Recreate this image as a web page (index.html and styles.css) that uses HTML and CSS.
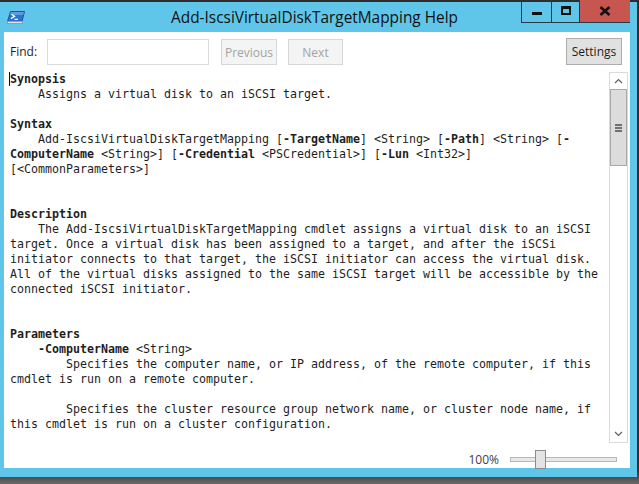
FILE: index.html
```html
<!DOCTYPE html>
<html lang="en">
<head>
<meta charset="utf-8">
<title>Add-IscsiVirtualDiskTargetMapping Help</title>
<link rel="stylesheet" href="styles.css">
</head>
<body>
<div class="screen">
  <div class="window">
    <div class="titlebar">
      <div class="tb-left">
        <svg class="app-icon" width="18" height="13" viewBox="0 0 18 13" aria-hidden="true">
          <polygon points="3.5,0.5 17.5,0.5 15,10.5 0.5,10.5" fill="#2f72c9" stroke="#1c58a6"/>
          <polygon points="4,1 17,1 16,4 3,4" fill="#5d9ae0"/>
          <path d="M4.5 3.2 L7.5 5.3 L4 7.6" stroke="#fff" stroke-width="1.4" fill="none"/>
          <path d="M7.5 8.3 H11" stroke="#fff" stroke-width="1.2"/>
          <rect x="0.5" y="10.5" width="15" height="2" fill="#dfe4ea" stroke="#8f9bab"/>
        </svg>
      </div>
      <div class="title">Add-IscsiVirtualDiskTargetMapping Help</div>
      <div class="tb-right">
        <div class="caption">
          <div class="cbtn cbtn-min"><span class="glyph-min"></span></div>
          <div class="cbtn cbtn-max"><span class="glyph-max"></span></div>
          <div class="cbtn cbtn-close">
            <svg width="12" height="10" viewBox="0 0 12 10" aria-hidden="true">
              <path d="M1.5 1 L10.5 9 M10.5 1 L1.5 9" stroke="#111" stroke-width="2.6"/>
            </svg>
          </div>
        </div>
      </div>
    </div>

    <div class="client">
      <div class="toolbar">
        <label class="find-label">Find:</label>
        <div class="find-box"></div>
        <div class="btn btn-disabled btn-prev">Previous</div>
        <div class="btn btn-disabled btn-next">Next</div>
        <div class="btn btn-settings">Settings</div>
      </div>

      <div class="content">
        <div class="help">
          <div class="ln"><span class="caret"></span><b>Synopsis</b></div>
          <div class="ln">    Assigns a virtual disk to an iSCSI target.</div>
          <div class="ln"></div>
          <div class="ln"><b>Syntax</b></div>
          <div class="ln">    Add-IscsiVirtualDiskTargetMapping [<b>-TargetName</b>] &lt;String&gt; [<b>-Path</b>] &lt;String&gt; [<b>-</b></div>
          <div class="ln"><b>ComputerName</b> &lt;String&gt;] [<b>-Credential</b> &lt;PSCredential&gt;] [<b>-Lun</b> &lt;Int32&gt;]</div>
          <div class="ln">[&lt;CommonParameters&gt;]</div>
          <div class="ln"></div>
          <div class="ln"></div>
          <div class="ln"><b>Description</b></div>
          <div class="ln">    The Add-IscsiVirtualDiskTargetMapping cmdlet assigns a virtual disk to an iSCSI</div>
          <div class="ln">target. Once a virtual disk has been assigned to a target, and after the iSCSi</div>
          <div class="ln">initiator connects to that target, the iSCSI initiator can access the virtual disk.</div>
          <div class="ln">All of the virtual disks assigned to the same iSCSI target will be accessible by the</div>
          <div class="ln">connected iSCSI initiator.</div>
          <div class="ln"></div>
          <div class="ln"></div>
          <div class="ln"><b>Parameters</b></div>
          <div class="ln">    <b>-ComputerName</b> &lt;String&gt;</div>
          <div class="ln">        Specifies the computer name, or IP address, of the remote computer, if this</div>
          <div class="ln">cmdlet is run on a remote computer.</div>
          <div class="ln"></div>
          <div class="ln">        Specifies the cluster resource group network name, or cluster node name, if</div>
          <div class="ln">this cmdlet is run on a cluster configuration.</div>
        </div>
        <div class="scrollbar">
          <div class="sb-btn">
            <svg width="9" height="6" viewBox="0 0 9 6" aria-hidden="true"><path d="M1 5 L4.5 1.5 L8 5" stroke="#606060" stroke-width="1.2" fill="none"/></svg>
          </div>
          <div class="sb-track">
            <div class="sb-thumb">
              <span class="grip"></span><span class="grip"></span><span class="grip"></span>
            </div>
          </div>
          <div class="sb-btn">
            <svg width="9" height="6" viewBox="0 0 9 6" aria-hidden="true"><path d="M1 1 L4.5 4.5 L8 1" stroke="#606060" stroke-width="1.2" fill="none"/></svg>
          </div>
        </div>
      </div>

      <div class="statusbar">
        <span class="zoom-label">100%</span>
        <div class="slider">
          <div class="slider-track"></div>
          <div class="slider-thumb"></div>
        </div>
      </div>
    </div>
  </div>
</div>
</body>
</html>
```

FILE: styles.css
```css
html, body {
  margin: 0;
  padding: 0;
  background: #444;
}

.screen {
  width: 639px;
  height: 484px;
  box-sizing: border-box;
  padding: 2px 2px 7px 0;
  background: linear-gradient(to bottom, #2e2e2e 0, #2e2e2e 470px, #6a6a6a 484px);
  overflow: hidden;
}

.window {
  height: 100%;
  background: #5fc6ea;
  display: flex;
  flex-direction: column;
}

/* Title bar */
.titlebar {
  height: 30px;
  flex: none;
  display: grid;
  grid-template-columns: 1fr auto 1fr;
  align-items: center;
}

.tb-left {
  display: flex;
  align-items: center;
  padding-left: 7px;
}

.app-icon {
  display: block;
}

.title {
  font-family: "Open Sans", "Noto Sans", sans-serif;
  font-size: 15.4px;
  color: #111;
  margin-right: 8px;
  white-space: nowrap;
}

.tb-right {
  align-self: start;
  display: flex;
  justify-content: flex-end;
  margin-top: -2px;
  padding-right: 7px;
}

.caption {
  display: flex;
  height: 23px;
  border: 1px solid #253a45;
  border-top: none;
  border-right: none;
  box-sizing: border-box;
}

.cbtn {
  display: flex;
  align-items: center;
  justify-content: center;
  height: 100%;
}

.cbtn-min {
  width: 29px;
  border-right: 1px solid #253a45;
}

.cbtn-max {
  width: 27px;
  border-right: 1px solid #253a45;
}

.cbtn-close {
  width: 50px;
  background: #c75550;
}

.glyph-min {
  display: block;
  width: 10px;
  height: 3px;
  background: #111;
  margin-top: 5px;
}

.glyph-max {
  display: block;
  width: 6px;
  height: 4px;
  border: 2px solid #111;
  border-top-width: 3px;
  margin-top: -1px;
}

/* Client area */
.client {
  flex: 1;
  margin: 0 7px 9px 4px;
  background: #fff;
  display: flex;
  flex-direction: column;
  min-height: 0;
}

.toolbar {
  height: 40px;
  flex: none;
  box-sizing: border-box;
  padding: 6px 8px 0 6px;
  display: flex;
  align-items: flex-start;
  font-family: "Open Sans", "Noto Sans", sans-serif;
  font-size: 12px;
}

.find-label {
  width: 37px;
  height: 26px;
  margin-top: 1px;
  line-height: 26px;
  color: #1e1e1e;
}

.find-box {
  width: 162px;
  height: 26px;
  margin-top: 1px;
  box-sizing: border-box;
  border: 1px solid #dcdcdc;
  background: #fff;
}

.btn {
  height: 26px;
  box-sizing: border-box;
  display: flex;
  align-items: center;
  justify-content: center;
  border: 1px solid #adadad;
}

.btn-disabled {
  margin-top: 1px;
  background: #f4f4f4;
  border-color: #d7d7d7;
  color: #a3a3a3;
}

.btn-prev {
  width: 56px;
  margin-left: 12px;
}

.btn-next {
  width: 55px;
  margin-left: 11px;
}

.btn-settings {
  width: 56px;
  height: 27px;
  margin-left: auto;
  background: #e1e1e1;
  border-color: #acacac;
  color: #1e1e1e;
}

/* Help text */
.content {
  flex: none;
  height: 371px;
  display: flex;
}

.help {
  flex: 1;
  padding: 0 0 0 6px;
  overflow: hidden;
  font-family: "DejaVu Sans Mono", "Liberation Mono", monospace;
  font-size: 11.63px;
  color: #1e1e1e;
}

.ln {
  height: 15px;
  line-height: 15px;
  white-space: pre;
}

.ln b {
  font-weight: bold;
}

.caret {
  display: inline-block;
  width: 1px;
  height: 14px;
  margin-left: -1px;
  background: #111;
  vertical-align: -3px;
}

/* Scrollbar */
.scrollbar {
  width: 19px;
  margin-right: 2px;
  box-sizing: border-box;
  border: 1px solid #dadada;
  display: flex;
  flex-direction: column;
}

.sb-btn {
  height: 16px;
  flex: none;
  display: flex;
  align-items: center;
  justify-content: center;
  background: #fff;
}

.sb-track {
  flex: 1;
  background: #fff;
}

.sb-thumb {
  height: 77px;
  box-sizing: border-box;
  border: 1px solid #a9a9a9;
  background: #dcdcdc;
  display: flex;
  flex-direction: column;
  align-items: center;
  justify-content: center;
  gap: 1px;
}

.grip {
  display: block;
  width: 7px;
  height: 2px;
  background: #6e6e6e;
}

/* Status bar */
.statusbar {
  flex: 1;
  display: flex;
  align-items: center;
  justify-content: flex-end;
  padding: 7px 13px 0 0;
  font-family: "Open Sans", "Noto Sans", sans-serif;
  font-size: 12px;
}

.zoom-label {
  color: #3d3d4a;
  margin-right: 11px;
}

.slider {
  position: relative;
  width: 107px;
  height: 19px;
  display: flex;
  align-items: center;
}

.slider-track {
  width: 100%;
  height: 5px;
  box-sizing: border-box;
  border: 1px solid #b7b7b7;
  background: #e8e8e8;
}

.slider-thumb {
  position: absolute;
  left: 25px;
  top: 0;
  width: 11px;
  height: 19px;
  box-sizing: border-box;
  border: 1px solid #8c8c8c;
  background: #e3e3e3;
}
```
